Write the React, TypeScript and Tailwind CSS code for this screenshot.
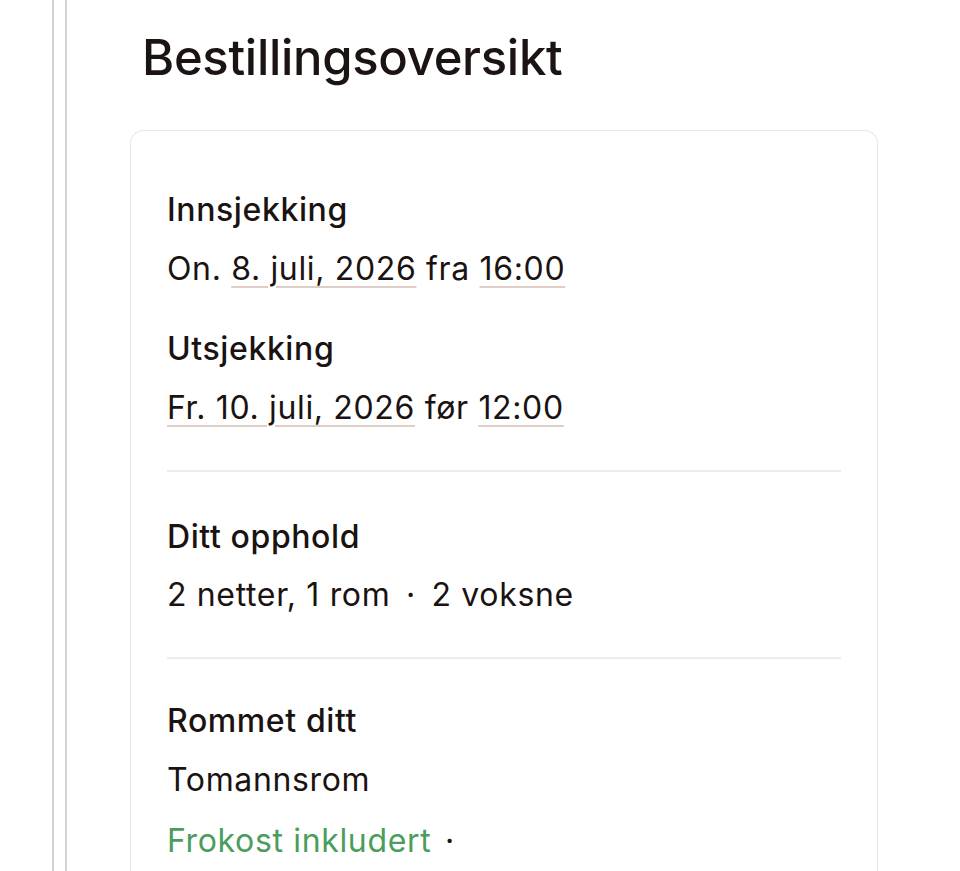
import React from 'react';

const font = { fontFamily: 'Inter, "Noto Sans", sans-serif' };

const Link: React.FC<{ children: React.ReactNode }> = ({ children }) => (
  <span className="underline decoration-[#e0cec6] decoration-[1.5px] underline-offset-[6px]">{children}</span>
);

const Label: React.FC<{ children: React.ReactNode; className?: string }> = ({ children, className = '' }) => (
  <div className={`text-[32px] leading-[44px] font-medium tracking-[0.6px] text-[#1a1311] ${className}`}>{children}</div>
);

const Value: React.FC<{ children: React.ReactNode; className?: string }> = ({ children, className = '' }) => (
  <div className={`text-[32px] leading-[44px] tracking-[0.65px] text-[#1a1311] ${className}`}>{children}</div>
);

const App: React.FC = () => {
  return (
    <div className="min-h-screen bg-white flex" style={font}>
      <div className="ml-[52px] border-l-2 border-[#d2d2d2]" />
      <div className="ml-[11px] border-l-2 border-[#d2d2d2] flex-1 flex flex-col pl-[63px] pr-[82px]">
        <h1 className="pl-[12px] pt-[26px] text-[49px] leading-[64px] font-medium text-[#1c1412] tracking-[-0.3px]">
          Bestillingsoversikt
        </h1>
        <div className="mt-[40px] border border-[#ebe6e6] border-b-0 rounded-t-[14px] px-[36px] flex-1">
          <section className="pt-[57px] pb-10">
            <Label>Innsjekking</Label>
            <Value className="mt-[15px]">
              On. <Link>8. juli, 2026</Link> fra <Link>16:00</Link>
            </Value>
            <Label className="mt-[36px]">Utsjekking</Label>
            <Value className="mt-[15px]">
              <Link>Fr. 10. juli, 2026</Link> før <Link>12:00</Link>
            </Value>
          </section>
          <div className="h-[2px] bg-[#efebeb]" />
          <section className="pt-[43px] pb-10">
            <Label>Ditt opphold</Label>
            <Value className="mt-[14px]">
              2 netter, 1 rom <span className="mx-[6px]">·</span> 2 voksne
            </Value>
          </section>
          <div className="h-[2px] bg-[#efebeb]" />
          <section className="pt-[40px] pb-10">
            <Label>Rommet ditt</Label>
            <Value className="mt-[15px]">Tomannsrom</Value>
            <Value className="mt-[17px]">
              <span className="text-[#4a9d5b]">Frokost inkludert</span>{' '}
              <span className="ml-[4px]">·</span>
            </Value>
          </section>
        </div>
      </div>
    </div>
  );
};

export default App;
